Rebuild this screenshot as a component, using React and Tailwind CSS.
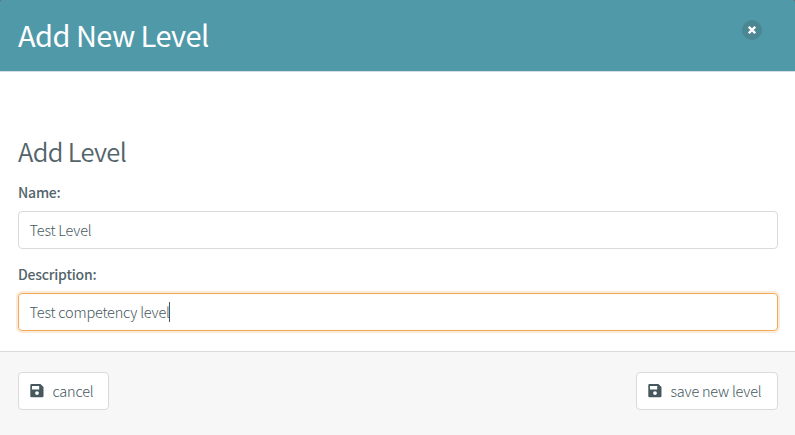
function SaveIcon() {
  return (
    <svg className="mr-[8.5px] h-[14px] w-[14px] shrink-0" viewBox="0 0 14 14" fill="#46585d" aria-hidden="true">
      <path
        fillRule="evenodd"
        d="M1.5 0H10.4L13.5 3V12Q13.5 13.2 12.3 13.2H1.5Q0.3 13.2 0.3 12V1.2Q0.3 0 1.5 0ZM2 2V5.6H9.2V2ZM7 7.2A1.9 1.9 0 1 0 7 11A1.9 1.9 0 1 0 7 7.2Z"
      />
    </svg>
  );
}

function Button({ className, children }) {
  return (
    <button
      className={`flex h-[38px] items-center rounded-[4px] border border-[#dadada] bg-white pl-[11px] text-[14.5px] leading-[20px] font-light tracking-[-0.22px] text-[#46585d] ${className}`}
    >
      <SaveIcon />
      <span className="whitespace-nowrap">{children}</span>
    </button>
  );
}

export default function App() {
  return (
    <div className="flex h-[435px] w-[795px] flex-col overflow-hidden bg-[#6b5f66] font-['Noto_Sans_CJK_SC',sans-serif] text-[#46585d]">
      <header className="flex h-[72px] shrink-0 items-start justify-between rounded-t-[2px] border-b border-[#d5dfe3] bg-[#5099a9] bg-clip-padding pr-[33px] pl-[18px]">
        <h1 className="pt-[14px] text-[29px] leading-[40px] font-normal tracking-[-0.55px] text-white">Add New Level</h1>
        <button className="mt-[20px] flex h-5 w-5 items-center justify-center rounded-full bg-[#4b8693]" aria-label="Close">
          <svg className="h-2 w-2" viewBox="0 0 8 8" stroke="#fff" strokeWidth="2.3" aria-hidden="true">
            <path d="M0.8 0.8L7.2 7.2M7.2 0.8L0.8 7.2" />
          </svg>
        </button>
      </header>
      <main className="flex h-[279px] shrink-0 flex-col bg-white pt-[63px] pr-[17px] pl-[18px]">
        <h2 className="text-[25.5px] leading-[32px] font-[350] tracking-[-0.65px] text-[#53646a]">Add Level</h2>
        <label className="mt-[15px] text-[14px] leading-[20px] font-medium tracking-[-0.22px] text-[#53646a]">Name:</label>
        <div className="mt-[9px] flex h-[38px] shrink-0 items-center rounded-[4px] border border-[#dadada] px-[10.5px] text-[14.5px] font-light tracking-[-0.2px] text-[#46585d]">
          <span>Test Level</span>
        </div>
        <label className="mt-[15px] text-[14px] leading-[20px] font-medium tracking-[-0.22px] text-[#53646a]">Description:</label>
        <div className="mt-[9px] flex h-[38px] shrink-0 items-center rounded-[4px] border border-[#f2a859] px-[10.5px] text-[14.5px] font-light tracking-[-0.2px] text-[#46585d] shadow-[0_0_0_2px_#fcebd9]">
          <span>Test competency level</span>
          <span className="-ml-px h-[20px] w-px bg-[#46585d]" />
        </div>
      </main>
      <footer className="flex flex-1 items-start justify-between border-t border-[#dadada] bg-[#f7f7f7] pt-[20px] pr-[17px] pl-[18px]">
        <Button className="w-[91px]">cancel</Button>
        <Button className="w-[142px]">save new level</Button>
      </footer>
    </div>
  );
}
